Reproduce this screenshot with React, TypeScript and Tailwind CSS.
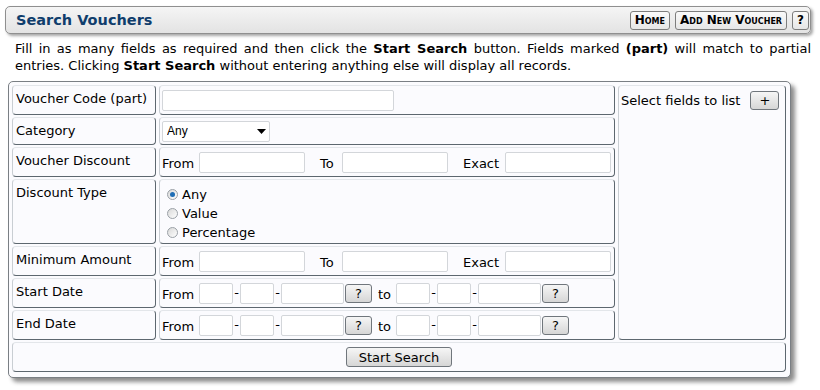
import React from "react";

const font = { fontFamily: '"DejaVu Sans", Verdana, sans-serif' };

const Cell = ({ className = "", children }: { className?: string; children?: React.ReactNode }) => (
  <div
    className={`rounded-[4px] border border-t-[#e3e6ea] border-l-[#c9ced3] border-r-[#5d676f] border-b-[#5d676f] ${className}`}
  >
    {children}
  </div>
);

const TextBox = ({ w }: { w: string }) => (
  <input
    type="text"
    className={`${w} h-[21px] rounded-[2px] border border-[#d3d6da] bg-white outline-none`}
  />
);

const GrayButton = ({ className = "", children }: { className?: string; children: React.ReactNode }) => (
  <button
    className={`rounded-[3px] border border-[#70767c] bg-gradient-to-b from-[#f6f6f6] to-[#d6d6d6] text-[13px] leading-none text-black ${className}`}
  >
    {children}
  </button>
);

const Label = ({ children }: { children: React.ReactNode }) => (
  <Cell className="px-[3px] pt-[5px] text-[13px] leading-[16px]">{children}</Cell>
);

const RangeRow = () => (
  <div className="flex items-center h-full pl-[2px] text-[13px]">
    <span className="w-[37px] pt-[3px]">From</span>
    <TextBox w="w-[106px]" />
    <span className="ml-[15px] w-[22px] pt-[3px]">To</span>
    <TextBox w="w-[106px]" />
    <span className="ml-[15px] w-[42px] pt-[3px]">Exact</span>
    <TextBox w="w-[106px]" />
  </div>
);

const DateRow = () => (
  <div className="flex items-center h-full pl-[2px] text-[13px]">
    <span className="w-[37px] pt-[3px]">From</span>
    <TextBox w="w-[34px]" />
    <span className="w-[7px] text-center">-</span>
    <TextBox w="w-[34px]" />
    <span className="w-[7px] text-center">-</span>
    <TextBox w="w-[63px]" />
    <GrayButton className="ml-[1px] w-[27px] h-[19px]">?</GrayButton>
    <span className="ml-[6px] w-[18px] pt-[3px]">to</span>
    <TextBox w="w-[34px]" />
    <span className="w-[7px] text-center">-</span>
    <TextBox w="w-[34px]" />
    <span className="w-[7px] text-center">-</span>
    <TextBox w="w-[63px]" />
    <GrayButton className="ml-[1px] w-[27px] h-[19px]">?</GrayButton>
  </div>
);

const Radio = ({ checked, label }: { checked?: boolean; label: string }) => (
  <label className="flex items-center h-[19px] gap-[4px]">
    <span className="flex items-center justify-center w-[11px] h-[11px] rounded-full border border-[#9aa0a6] bg-gradient-to-br from-[#d8d8d8] to-white">
      {checked && <span className="w-[5px] h-[5px] rounded-full bg-[#1f6db5]" />}
    </span>
    <span>{label}</span>
  </label>
);

export default function App() {
  return (
    <div className="w-[820px] h-[390px] bg-white text-black" style={font}>
      <div className="pt-[6px] pl-[5px]">
        <div className="flex items-center justify-between w-[806px] h-[28px] rounded-[5px] border border-[#8f8f8f] bg-gradient-to-b from-[#f5f5f5] to-[#e3e3e3] shadow-[2px_2px_3px_rgba(0,0,0,0.35)] pl-[10px] pr-[1px]">
          <h1 className="text-[14.5px] font-bold text-[#0f3d6c] leading-none">Search Vouchers</h1>
          <div className="flex gap-[5px]">
            {["Home", "Add New Voucher", "?"].map((t) => (
              <button
                key={t}
                className="h-[19px] px-[4px] rounded-[3px] border border-[#7d7d7d] bg-gradient-to-b from-[#fafafa] to-[#e6e6e6] text-[12px] font-bold leading-none [font-variant:small-caps] text-black"
              >
                {t}
              </button>
            ))}
          </div>
        </div>
      </div>

      <p className="ml-[15px] mt-[6px] w-[796px] text-[13px] leading-[17px] text-justify [text-align-last:left]">
        Fill in as many fields as required and then click the <b>Start Search</b> button. Fields marked{" "}
        <b>(part)</b> will match to partial entries. Clicking <b>Start Search</b> without entering anything else
        will display all records.
      </p>

      <div className="ml-[8px] mt-[7px] w-[783px] rounded-[5px] border border-[#7a7f84] bg-[#fbfbfe] shadow-[4px_4px_4px_rgba(0,0,0,0.45)] pt-[3px] pl-[3px] pr-[4px] pb-[5px]">
        <div className="grid grid-cols-[144px_456px_168px] grid-rows-[30px_28px_30px_65px_30px_30px_30px_30px] gap-x-[3px] gap-y-[2px] text-[13px]">
          <Label>Voucher Code (part)</Label>
          <Cell className="flex items-center pl-[2px]">
            <TextBox w="w-[232px]" />
          </Cell>
          <Cell className="row-span-7">
            <div className="flex items-center gap-[10px] pl-[2px] pt-[5px]">
              <span>Select fields to list</span>
              <GrayButton className="w-[29px] h-[19px]">+</GrayButton>
            </div>
          </Cell>

          <Label>Category</Label>
          <Cell className="flex items-center pl-[2px]">
            <div className="relative w-[108px] h-[21px]">
              <select className="appearance-none w-full h-full rounded-[2px] border border-[#d3d6da] bg-white pl-[4px] text-[12px] outline-none" style={{ fontFamily: '"Liberation Sans", Arial, sans-serif' }}>
                <option>Any</option>
              </select>
              <svg className="absolute right-[4px] top-[8px]" width="9" height="5" viewBox="0 0 9 5">
                <path d="M0 0h9L4.5 5z" fill="#000" />
              </svg>
            </div>
          </Cell>

          <Label>Voucher Discount</Label>
          <Cell>
            <RangeRow />
          </Cell>

          <Label>Discount Type</Label>
          <Cell className="pl-[7px] pt-[5px]">
            <Radio checked label="Any" />
            <Radio label="Value" />
            <Radio label="Percentage" />
          </Cell>

          <Label>Minimum Amount</Label>
          <Cell>
            <RangeRow />
          </Cell>

          <Label>Start Date</Label>
          <Cell>
            <DateRow />
          </Cell>

          <Label>End Date</Label>
          <Cell>
            <DateRow />
          </Cell>

          <Cell className="col-span-3 flex items-center justify-center">
            <GrayButton className="w-[106px] h-[20px]">Start Search</GrayButton>
          </Cell>
        </div>
      </div>
    </div>
  );
}
